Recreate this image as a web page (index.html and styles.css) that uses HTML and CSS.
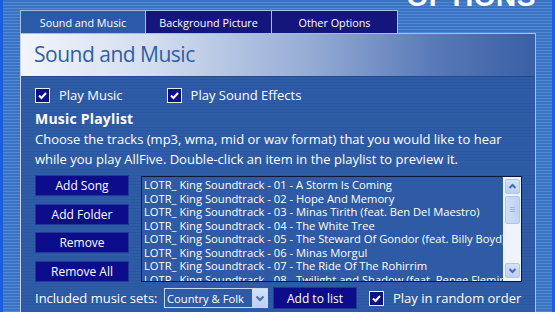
FILE: index.html
```html
<!DOCTYPE html>
<html>
<head>
<meta charset="utf-8">
<link rel="stylesheet" href="styles.css">
</head>
<body>
<div class="screen">
  <div class="brand"><span class="brand-text">OPTIONS</span></div>
  <div class="tabs">
    <div class="tab tab-active">Sound and Music</div>
    <div class="tab">Background Picture</div>
    <div class="tab">Other Options</div>
  </div>
  <div class="panel">
    <div class="panel-head"><h1 class="panel-title">Sound and Music</h1></div>
    <div class="panel-body">
      <div class="checks">
        <label class="check"><span class="box"><svg viewBox="0 0 15 15" width="15" height="15"><path d="M4 7.5 L6.5 10 L11 5" fill="none" stroke="#fff" stroke-width="2"/></svg></span><span>Play Music</span></label>
        <label class="check"><span class="box"><svg viewBox="0 0 15 15" width="15" height="15"><path d="M4 7.5 L6.5 10 L11 5" fill="none" stroke="#fff" stroke-width="2"/></svg></span><span>Play Sound Effects</span></label>
      </div>
      <h2 class="section-title">Music Playlist</h2>
      <p class="desc">Choose the tracks (mp3, wma, mid or wav format) that you would like to hear while you play AllFive. Double-click an item in the playlist to preview it.</p>
      <div class="playlist">
        <div class="btns">
          <div class="btn">Add Song</div>
          <div class="btn">Add Folder</div>
          <div class="btn">Remove</div>
          <div class="btn">Remove All</div>
        </div>
        <div class="listbox">
          <ul class="tracks">
            <li>LOTR_ King Soundtrack - 01 - A Storm Is Coming</li>
            <li>LOTR_ King Soundtrack - 02 - Hope And Memory</li>
            <li>LOTR_ King Soundtrack - 03 - Minas Tirith (feat. Ben Del Maestro)</li>
            <li>LOTR_ King Soundtrack - 04 - The White Tree</li>
            <li>LOTR_ King Soundtrack - 05 - The Steward Of Gondor (feat. Billy Boyd)</li>
            <li>LOTR_ King Soundtrack - 06 - Minas Morgul</li>
            <li>LOTR_ King Soundtrack - 07 - The Ride Of The Rohirrim</li>
            <li>LOTR_ King Soundtrack - 08 - Twilight and Shadow (feat. Renee Fleming)</li>
          </ul>
          <div class="scrollbar">
            <div class="sb-btn"><svg viewBox="0 0 13 13" width="13" height="13"><path d="M3.5 8 L6.5 5 L9.5 8" fill="none" stroke="#4a6bb4" stroke-width="2"/></svg></div>
            <div class="sb-thumb"><svg viewBox="0 0 13 26" width="13" height="26"><path d="M4 10.5 H9 M4 12.5 H9 M4 14.5 H9" stroke="#9ab4e4" stroke-width="1"/></svg></div>
            <div class="sb-space"></div>
            <div class="sb-btn"><svg viewBox="0 0 13 13" width="13" height="13"><path d="M3.5 5 L6.5 8 L9.5 5" fill="none" stroke="#4a6bb4" stroke-width="2"/></svg></div>
          </div>
        </div>
      </div>
      <div class="bottom">
        <span class="bottom-label">Included music sets:</span>
        <div class="select"><span class="select-text">Country &amp; Folk</span><span class="select-btn"><svg viewBox="0 0 14 16" width="14" height="16"><path d="M3.5 6.5 L7 10 L10.5 6.5" fill="none" stroke="#4a6bb4" stroke-width="2"/></svg></span></div>
        <div class="btn btn-add">Add to list</div>
        <label class="check check-random"><span class="box"><svg viewBox="0 0 15 15" width="15" height="15"><path d="M4 7.5 L6.5 10 L11 5" fill="none" stroke="#fff" stroke-width="2"/></svg></span><span>Play in random order</span></label>
      </div>
    </div>
  </div>
</div>
</body>
</html>
```
FILE: styles.css
```css
* { box-sizing: border-box; }
html, body { margin: 0; padding: 0; }
body {
  width: 555px;
  height: 312px;
  overflow: hidden;
  font-family: "Open Sans", "Noto Sans", sans-serif;
  color: #fff;
}
.screen {
  width: 555px;
  height: 312px;
  border-left: 3px solid #1c5be6;
  border-right: 3px solid #1c5be6;
  padding-left: 17px;
  padding-right: 16px;
  background: repeating-linear-gradient(to bottom, #3a72c4 0px, #3a72c4 2px, #5289d3 2px, #5289d3 3px);
  display: flex;
  flex-direction: column;
}
.brand {
  height: 10px;
  display: flex;
  justify-content: flex-end;
  align-items: flex-end;
}
.brand-text {
  font-family: "Liberation Sans", sans-serif;
  font-weight: bold;
  font-size: 28px;
  line-height: 28px;
  margin-bottom: -1px;
  letter-spacing: 0.5px;
  color: #fff;
}
.tabs {
  display: flex;
  height: 24px;
}
.tab {
  width: 126px;
  height: 24px;
  border: 1px solid #a9bfe6;
  border-bottom: none;
  border-left: none;
  background: #15157e;
  font-size: 10.8px;
  display: flex;
  align-items: center;
  justify-content: center;
}
.tab:first-child { border-left: 1px solid #a9bfe6; }
.tab-active { background: #2d5aa8; }
.panel {
  flex: 1;
  border-left: 1px solid #c8d6ee;
  border-right: 1px solid #a6bfe8;
  border-top: 1px solid #a6bfe8;
  display: flex;
  flex-direction: column;
  margin-top: -1px;
}
.panel-head {
  height: 42px;
  background: linear-gradient(to right, #f2f5fb 0%, #d4def0 25%, #98aed6 55%, #5a7ab8 80%, #3a5fa6 100%);
  display: flex;
  align-items: center;
  padding-left: 13px;
}
.panel-title {
  margin: 0 0 2px 0;
  font-weight: normal;
  font-size: 21px;
  letter-spacing: -0.5px;
  color: #2f5ea8;
}
.panel-body {
  flex: 1;
  background: repeating-linear-gradient(to bottom, #2f5ca7 0px, #2f5ca7 2px, #2b57a1 2px, #2b57a1 3px);
  padding: 9px 0 0 14px;
  display: flex;
  flex-direction: column;
  border-top: 1px solid #24488c;
}
.checks {
  display: flex;
  align-items: center;
  gap: 44px;
  height: 18px;
}
.check {
  display: flex;
  align-items: center;
  gap: 9px;
  font-size: 13px;
}
.box {
  width: 15px;
  height: 15px;
  border: 1px solid #e6ecf8;
  background: #0e0e86;
  display: flex;
  align-items: center;
  justify-content: center;
  overflow: hidden;
}
.box svg { flex: none; }
.section-title {
  margin: 5px 0 0 0;
  font-size: 14px;
  font-weight: bold;
  letter-spacing: 0.2px;
  line-height: 20px;
}
.desc {
  margin: 0;
  font-size: 13px;
  line-height: 20px;
  width: 500px;
}
.playlist {
  display: flex;
  gap: 12px;
  margin-top: 6px;
  height: 107px;
}
.btns {
  width: 94px;
  display: flex;
  flex-direction: column;
  justify-content: space-between;
}
.btn {
  height: 21px;
  background: #0d0d8c;
  border: 1px solid #24389c;
  font-size: 12px;
  display: flex;
  align-items: center;
  justify-content: center;
}
.listbox {
  width: 381px;
  margin-top: 1px;
  height: 106px;
  border: 1px solid #0b1638;
  background: #2e5aa6;
  display: flex;
}
.tracks {
  flex: 1;
  margin: 0;
  padding: 1px 0 0 2px;
  list-style: none;
  overflow: hidden;
  font-size: 11.2px;
  line-height: 13.5px;
  white-space: nowrap;
}
.scrollbar {
  width: 18px;
  background: #eef3fc;
  display: flex;
  flex-direction: column;
  padding: 2px 1px 3px 2px;
}
.sb-btn {
  height: 15px;
  background: linear-gradient(to bottom, #d4e2f8, #bcd0f2);
  border: 1px solid #b0c6ee;
  border-radius: 2px;
  display: flex;
  align-items: center;
  justify-content: center;
}
.sb-thumb {
  height: 28px;
  margin-top: 2px;
  background: linear-gradient(to right, #d0dff8, #bfd2f2);
  border: 1px solid #b0c6ee;
  border-radius: 2px;
  display: flex;
  align-items: center;
  justify-content: center;
}
.sb-space { flex: 1; }
.bottom {
  display: flex;
  align-items: center;
  height: 22px;
  margin-top: 5px;
}
.bottom-label {
  font-size: 13px;
  width: 129px;
}
.select {
  width: 104px;
  height: 20px;
  border: 1px solid #c8d8f2;
  background: #2e5aa6;
  display: flex;
  align-items: center;
  justify-content: space-between;
  padding-left: 2px;
}
.select-text { font-size: 11.2px; }
.select-btn {
  width: 15px;
  height: 18px;
  background: linear-gradient(to bottom, #d4e2f8, #bcd0f2);
  display: flex;
  align-items: center;
  justify-content: center;
}
.btn-add {
  width: 84px;
  height: 22px;
  margin-left: 5px;
}
.check-random {
  margin-left: 12px;
  gap: 9px;
  font-size: 13px;
}
```
